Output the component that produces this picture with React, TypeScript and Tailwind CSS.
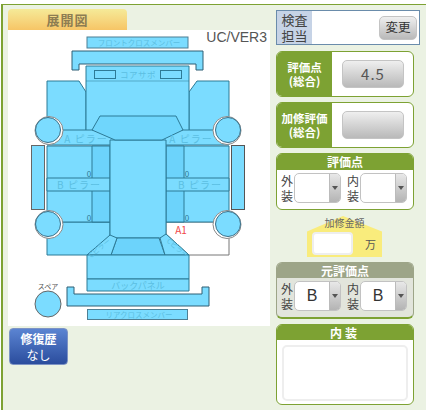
import React from 'react';

const jp = { fontFamily: '"Noto Sans CJK JP", "Liberation Sans", sans-serif' };

const FILL = '#7bdcff';
const DARK = '#6cd3fb';
const LINE = '#2d7a96';
const LABEL = '#5cbfe2';

// 展開図の各パネル
const panels: { points: string; fill?: string; stroke?: string }[] = [
  // フェンダー
  { points: '47,81 79,81 86,92 86,131 47,131' },
  { points: '229,81 197,81 189,92 189,131 229,131' },
  { points: '47,222 110,222 110,236 87,255 47,255' },
  { points: '166,222 214,222 229,238 229,255 189,255 166,234', fill: '#ffffff', stroke: '#777777' },
  // フロント
  { points: '86,66 189,66 189,131 86,131' },
  // Aピラー
  { points: '47,130 108,130 115,140 110,145 47,145' },
  { points: '229,130 168,130 161,140 166,145 229,145' },
  // ドア
  { points: '47,146 110,146 110,222 47,222' },
  { points: '92,146 110,146 110,222 92,222', fill: DARK },
  { points: '166,146 229,146 229,222 166,222' },
  { points: '166,146 184,146 184,222 166,222', fill: DARK },
  // Bピラー
  { points: '47,178 110,178 110,191 47,191' },
  { points: '166,178 229,178 229,191 166,191' },
  // ルーフ
  { points: '110,140 166,140 166,238 110,238' },
  { points: '100,116 176,116 183,130 162,140 115,140 92,130', fill: '#6fd6fc' },
  { points: '117,238 159,238 165,255 111,255', fill: DARK },
  { points: '110,235 117,238 111,255 87,255' },
  { points: '166,234 160,238 165,255 189,255' },
  // リア
  { points: '87,255 189,255 189,279 87,279' },
  { points: '87,279 189,279 189,291 87,291' },
];

const wheels = [
  [48, 130, 1],
  [228, 130, -1],
  [48, 224, 1],
  [228, 224, -1],
];

function CarDiagram() {
  return (
    <svg viewBox="8 30 262 296" className="block w-[262px] h-[296px]" style={jp}>
      <rect x="87" y="37" width="101" height="11" fill={FILL} stroke="#4d7f94" strokeWidth="1" />
      <polygon points="72,51 203,51 203,70 196,70 196,64 79,64 79,70 72,70" fill={FILL} stroke="#2f5f75" />
      {panels.map((p, i) => (
        <polygon key={i} points={p.points} fill={p.fill ?? FILL} stroke={p.stroke ?? LINE} strokeWidth="1" />
      ))}
      <line x1="86" y1="81" x2="189" y2="81" stroke={LINE} strokeOpacity="0.5" />
      <rect x="94.5" y="70.5" width="21" height="8" fill="none" stroke={LINE} />
      <rect x="160.5" y="70.5" width="21" height="8" fill="none" stroke={LINE} />

      <rect x="31.5" y="145.5" width="13" height="64" fill={FILL} stroke="#666666" />
      <rect x="231.5" y="145.5" width="13" height="64" fill={FILL} stroke="#555555" />

      {wheels.map(([x, y, d]) => (
        <g key={`${x}-${y}`}>
          <circle cx={x + d} cy={y + 0.5} r="14" fill="#ffffff" stroke="#888888" />
          <circle cx={x} cy={y} r="12.5" fill={FILL} stroke="#3a7089" />
        </g>
      ))}
      <circle cx="48" cy="304" r="13" fill={FILL} stroke="#666666" />

      <polygon points="67,287 74,287 74,294 202,294 202,287 209,287 209,306 67,306" fill={FILL} stroke="#2f5f75" />
      <rect x="87.5" y="309.5" width="100" height="10" fill={FILL} stroke="#4d7f94" />

      <g fill={LABEL} textAnchor="middle">
        <text x="139" y="45.5" fontSize="7.5">フロントクロスメンバー</text>
        <text x="138" y="78" fontSize="8.5" letterSpacing="0.5">コアサポ</text>
        <text x="86" y="143" fontSize="10" letterSpacing="1">A ピラー</text>
        <text x="191" y="143" fontSize="10" letterSpacing="1">A ピラー</text>
        <text x="79" y="189" fontSize="10" letterSpacing="1">B ピラー</text>
        <text x="200" y="189" fontSize="10" letterSpacing="1">B ピラー</text>
        <text x="138" y="289" fontSize="9">バックパネル</text>
        <text x="139" y="317.5" fontSize="7.5">リアクロスメンバー</text>
        <text x="101" y="250" fontSize="7" transform="rotate(-40 101 250)">Cピラー</text>
        <text x="176" y="250" fontSize="7" transform="rotate(40 176 250)">Cピラー</text>
      </g>
      <g fill="#2d7a96" fontSize="8" textAnchor="middle">
        <text x="89" y="176.5">0</text>
        <text x="89" y="220.5">0</text>
        <text x="187" y="176.5">0</text>
        <text x="187" y="220.5">0</text>
      </g>
      <text x="181" y="234" fontSize="10" fill="#f04848" textAnchor="middle">A1</text>
      <text x="48" y="289" fontSize="7" fill="#555555" textAnchor="middle">スペア</text>
    </svg>
  );
}

function GreyButton({ label, className }: { label?: string; className: string }) {
  return (
    <div
      className={`flex items-center justify-center rounded-[5px] border border-[#c4c4c4] bg-gradient-to-b from-[#efefef] to-[#b9b9b9] text-[#555] ${className}`}
    >
      {label}
    </div>
  );
}

function SelectBox({ value }: { value?: string }) {
  return (
    <div className="flex h-[30px] w-[47px] overflow-hidden rounded-[5px] border border-[#c2c2c2] bg-white">
      <div className="flex flex-1 items-center justify-center text-[16px] text-[#333]" style={{ fontFamily: '"Liberation Sans", sans-serif' }}>
        {value}
      </div>
      <div className="flex w-[11px] items-center justify-center border-l border-[#bbb] bg-gradient-to-b from-[#e8e8e8] to-[#b4b4b4]">
        <div className="h-0 w-0 border-x-[3px] border-t-[4px] border-x-transparent border-t-[#555]" />
      </div>
    </div>
  );
}

function SelectRow({ outer, inner }: { outer?: string; inner?: string }) {
  const cap = 'w-[13px] text-[12px] leading-[15px] text-[#444]';
  return (
    <div className="flex items-center pl-[4px] pt-[3px]">
      <div className={cap}>外<br />装</div>
      <SelectBox value={outer} />
      <div className={`${cap} ml-[6px]`}>内<br />装</div>
      <SelectBox value={inner} />
    </div>
  );
}

function ScorePanel({ title, children }: { title: string; children?: React.ReactNode }) {
  return (
    <div className="flex h-[46px] overflow-hidden rounded-[6px] border border-[#7da233] bg-white">
      <div className="flex w-[55px] items-center justify-center bg-[#7da233] text-center text-[11.5px] font-bold leading-[14px] text-white">
        {title.split('\n').map((t) => (
          <React.Fragment key={t}>{t}<br /></React.Fragment>
        ))}
      </div>
      <div className="flex flex-1 items-center pl-[10px]">{children}</div>
    </div>
  );
}

export default function App() {
  return (
    <div className="h-[410px] w-[426px] overflow-hidden bg-white pl-[1px] pt-[4px]" style={jp}>
      <div className="flex h-[406px] gap-[6px] border-l-2 border-t border-[#7da233] bg-[#ebf2e3] pl-[5px] pt-[4px]">
        {/* 左カラム */}
        <div className="w-[262px]">
          <div className="flex h-[21px] w-[119px] items-center justify-center rounded-t-[4px] bg-gradient-to-b from-[#f5ea98] to-[#f6c566] text-[13px] font-bold tracking-[1px] text-[#8d7d52]">
            展開図
          </div>
          <div className="relative h-[296px] bg-white">
            <CarDiagram />
            <span className="absolute right-[3px] top-[-3px] text-[14px] text-[#555]" style={{ fontFamily: '"Liberation Sans", sans-serif' }}>
              UC/VER3
            </span>
          </div>
          <div className="ml-[1px] mt-[2px] flex h-[37px] w-[59px] flex-col items-center justify-center rounded-[4px] border border-[#7d93c4] bg-gradient-to-b from-[#5b84d2] to-[#2b4d9d] text-[12px] leading-[16px] text-white">
            <span className="font-bold">修復歴</span>
            <span>なし</span>
          </div>
        </div>

        {/* 右カラム */}
        <div className="flex w-[138px] flex-col pt-[1px]">
          <div className="flex h-[35px] w-[144px] border border-[#6a8cab] bg-white">
            <div className="flex w-[35px] items-center justify-center bg-[#c6d3e6] text-center text-[13px] leading-[16px] text-[#444]">
              検査<br />担当
            </div>
            <div className="flex flex-1 items-center justify-end pr-[2px]">
              <GreyButton label="変更" className="h-[24px] w-[38px] text-[12.5px] !text-[#333]" />
            </div>
          </div>

          <div className="mt-[6px]">
            <ScorePanel title={'評価点\n(総合)'}>
              <GreyButton label="4.5" className="h-[28px] w-[62px] text-[15px] tracking-[1px]" />
            </ScorePanel>
          </div>
          <div className="mt-[5px]">
            <ScorePanel title={'加修評価\n(総合)'}>
              <GreyButton className="h-[28px] w-[62px]" />
            </ScorePanel>
          </div>

          <div className="mt-[5px] h-[57px] overflow-hidden rounded-[6px] border border-[#7da233] bg-white">
            <div className="h-[16px] bg-[#7da233] text-center text-[12px] font-bold leading-[16px] text-white">評価点</div>
            <SelectRow />
          </div>

          <div className="relative ml-[31px] mt-[6px] flex h-[41px] w-[75px] flex-col">
            <div className="absolute inset-0 bg-[#f9ec7c] [clip-path:polygon(48%_0,100%_38%,100%_100%,0_100%,0_38%)]" />
            <div className="relative text-center text-[10px] leading-[14px] text-[#666]">加修金額</div>
            <div className="relative mt-[2px] flex items-center pl-[5px]">
              <div className="h-[23px] w-[41px] rounded-[4px] border-2 border-[#eeeeee] bg-white" />
              <span className="ml-[12px] text-[11px] leading-[14px] text-[#555]">万</span>
            </div>
          </div>

          <div className="mt-[5px] h-[57px] overflow-hidden rounded-[6px] border border-b-2 border-[#9da588] border-b-[#7da233] bg-[#e2e5dc]">
            <div className="h-[15px] bg-[#9da588] text-center text-[12px] font-bold leading-[15px] text-white">元評価点</div>
            <SelectRow outer="B" inner="B" />
          </div>

          <div className="mt-[5px] h-[81px] overflow-hidden rounded-[6px] border border-[#7da233] bg-white">
            <div className="h-[15px] bg-[#7da233] text-center text-[12px] font-bold leading-[15px] tracking-[3px] text-white">内装</div>
            <div className="mx-[5px] mt-[5px] h-[56px] rounded-[5px] border-2 border-[#eeeeee] bg-white" />
          </div>
        </div>
      </div>
    </div>
  );
}
